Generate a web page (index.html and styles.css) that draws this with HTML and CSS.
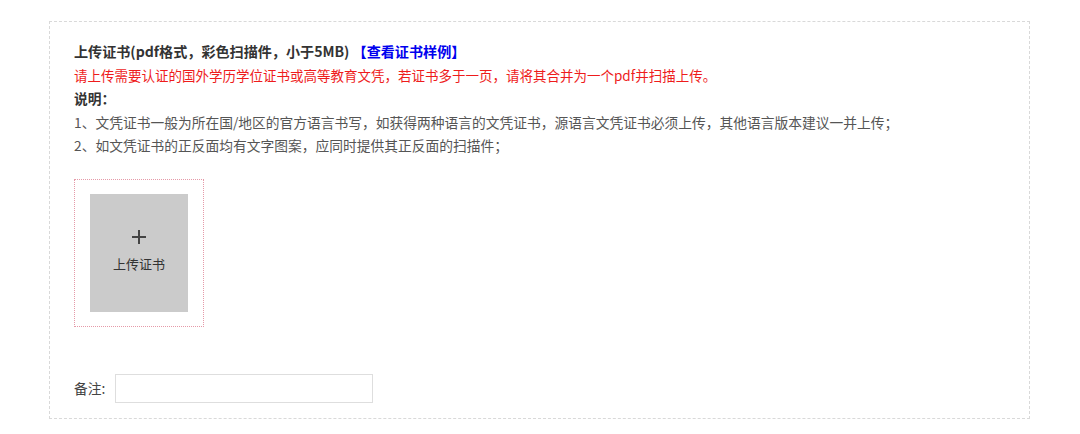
FILE: index.html
```html
<!DOCTYPE html>
<html lang="zh-CN">
<head>
<meta charset="utf-8">
<title>上传证书</title>
<link rel="stylesheet" href="styles.css">
</head>
<body>
<div class="panel">
  <div class="intro">
    <p class="title">上传证书(pdf格式，彩色扫描件，小于5MB) <a class="sample" href="#">【查看证书样例】</a></p>
    <p class="warn">请上传需要认证的国外学历学位证书或高等教育文凭，若证书多于一页，请将其合并为一个pdf并扫描上传。</p>
    <p class="label">说明：</p>
    <p class="note">1、文凭证书一般为所在国/地区的官方语言书写，如获得两种语言的文凭证书，源语言文凭证书必须上传，其他语言版本建议一并上传；</p>
    <p class="note">2、如文凭证书的正反面均有文字图案，应同时提供其正反面的扫描件；</p>
  </div>
  <div class="upload">
    <div class="upload-btn">
      <span class="plus"></span>
      <span class="upload-text">上传证书</span>
    </div>
  </div>
  <div class="remark">
    <span class="remark-label">备注:</span>
    <input class="remark-input" type="text">
  </div>
</div>
</body>
</html>
```
FILE: styles.css
```css
html, body {
  margin: 0;
  padding: 0;
  background: #fff;
}
body {
  font-family: "Noto Sans CJK SC", "Noto Sans", sans-serif;
  font-size: 13.75px;
  color: #555;
}
.panel {
  box-sizing: border-box;
  margin: 21px 0 0 49px;
  width: 981px;
  height: 398px;
  border: 1px dashed #d9d9d9;
  padding: 18px 24px 14px 24px;
  display: flex;
  flex-direction: column;
}
.intro p {
  margin: 0;
  line-height: 23.5px;
  white-space: nowrap;
}
.title {
  font-size: 14.1px;
  font-weight: bold;
  color: #333;
}
.sample {
  color: #0000ee;
  text-decoration: none;
  font-weight: bold;
}
.warn {
  font-size: 13.5px;
  color: #ee1c1c;
}
.label {
  font-weight: bold;
  color: #333;
}
.note {
  font-size: 13.75px;
}
.upload {
  margin-top: 21px;
  width: 98px;
  padding: 14px 15px 14px 15px;
  border: 1px dotted #e59aa8;
}
.upload-btn {
  width: 98px;
  height: 118px;
  background: #cbcbcb;
  display: flex;
  flex-direction: column;
  align-items: center;
}
.plus {
  position: relative;
  margin-top: 36px;
  width: 14px;
  height: 14px;
}
.plus::before,
.plus::after {
  content: "";
  position: absolute;
  background: #444;
}
.plus::before {
  left: 0;
  top: 6px;
  width: 14px;
  height: 2px;
}
.plus::after {
  left: 6px;
  top: 0;
  width: 2px;
  height: 14px;
}
.upload-text {
  margin-top: 11px;
  font-size: 13px;
  color: #333;
  line-height: 18px;
}
.remark {
  margin-top: 47px;
  display: flex;
  align-items: center;
  gap: 8px;
}
.remark-label {
  color: #444;
  width: 33px;
}
.remark-input {
  box-sizing: border-box;
  width: 258px;
  height: 29px;
  margin: 0;
  border: 1px solid #dedede;
  outline: none;
  background: #fff;
  padding: 0 6px;
}
```
